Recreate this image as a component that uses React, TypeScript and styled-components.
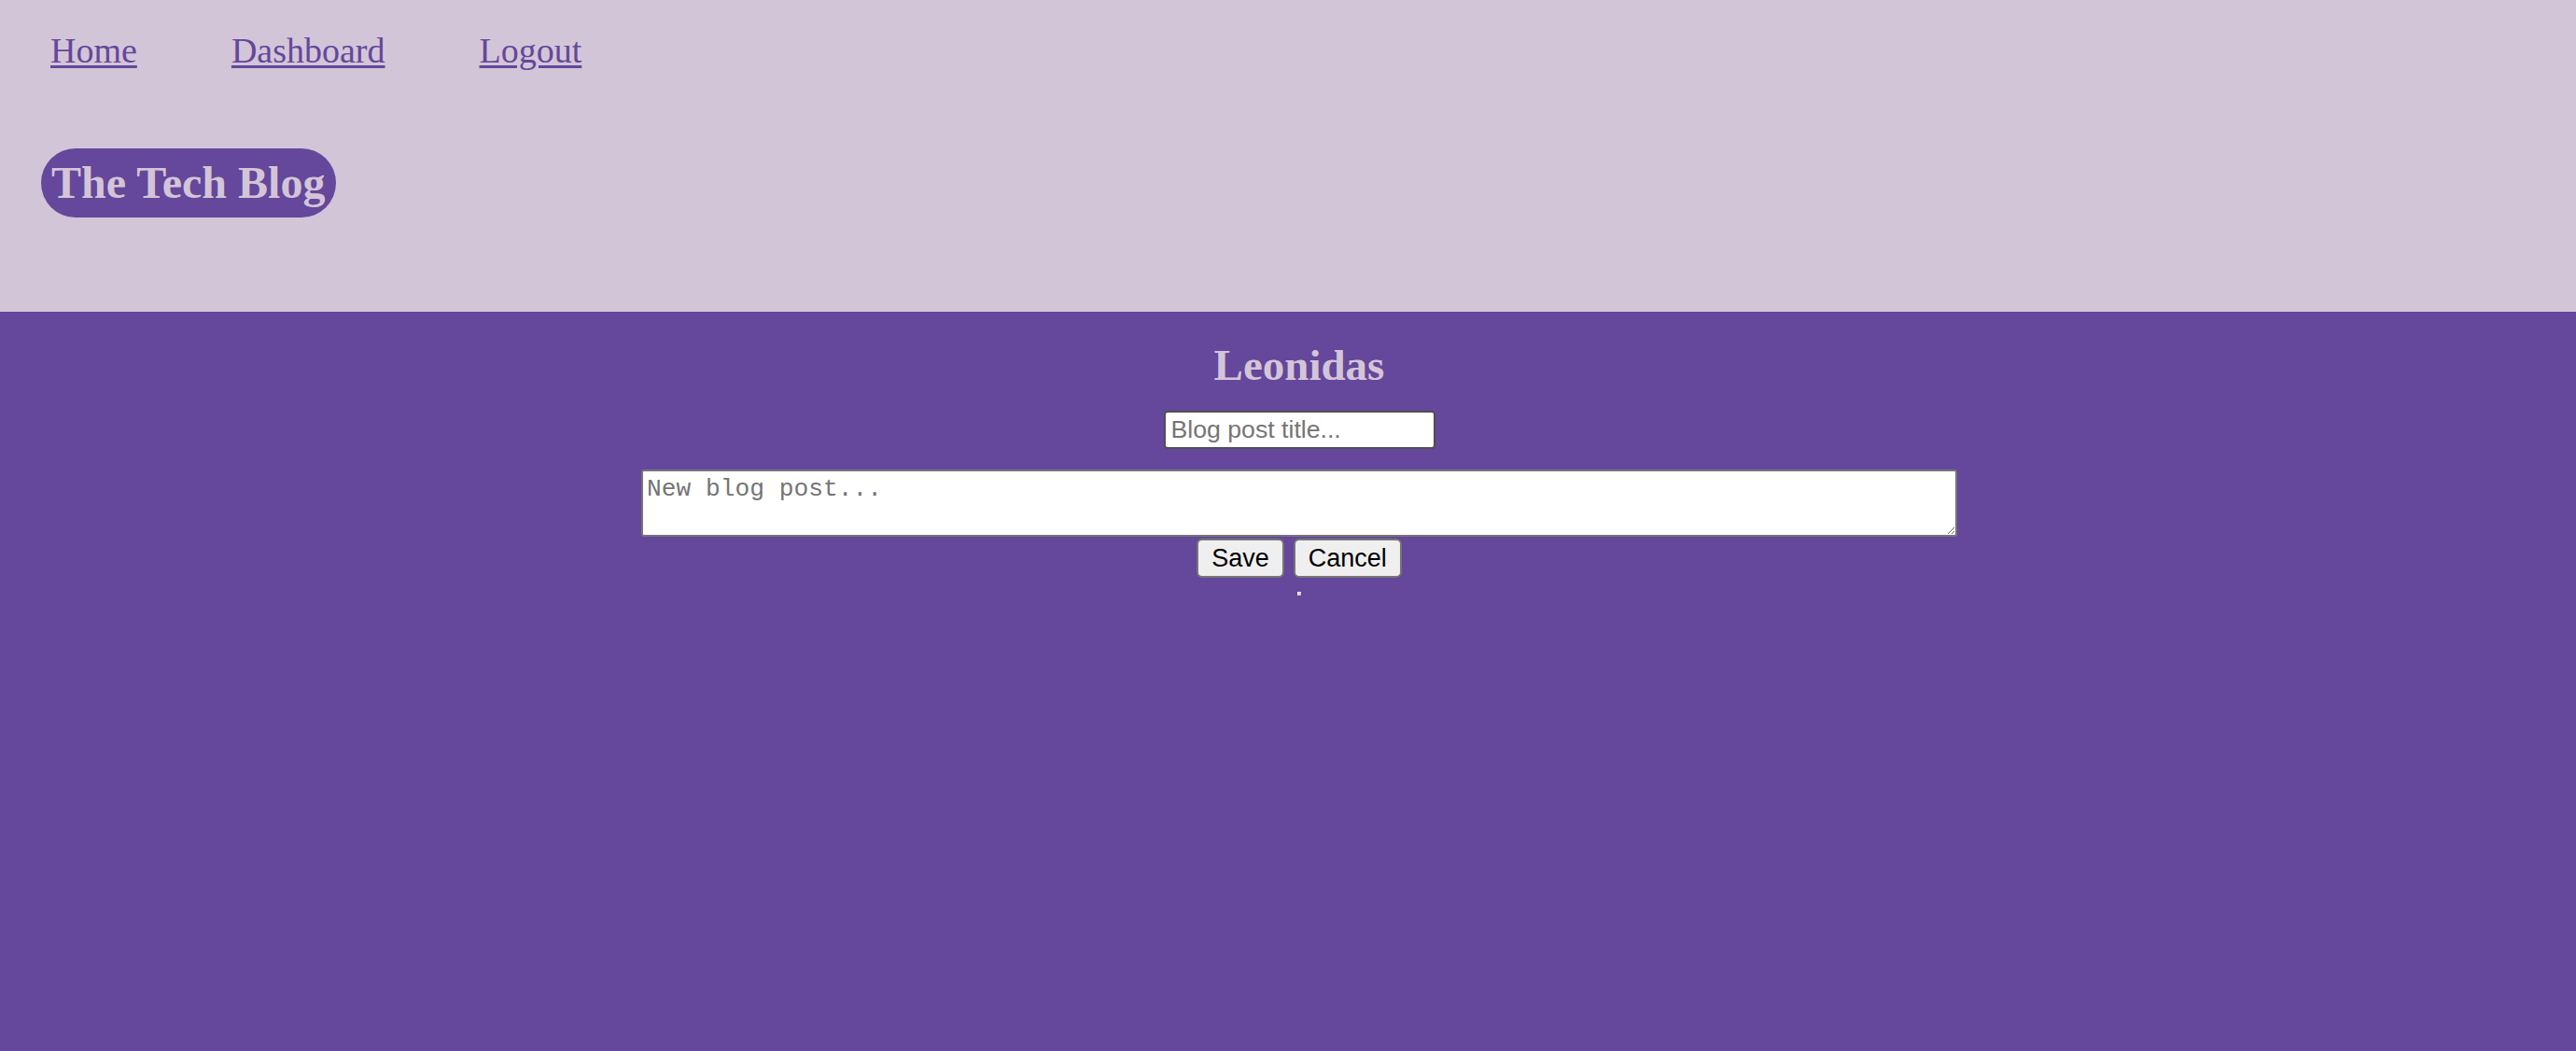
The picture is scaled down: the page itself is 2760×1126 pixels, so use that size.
import React from "react";
import styled, { createGlobalStyle } from "styled-components";

const GlobalStyle = createGlobalStyle`
  html, body {
    margin: 0;
    padding: 0;
    background: #65479b;
  }
  body {
    font-family: "Liberation Serif", "Times New Roman", serif;
  }
`;

const Page = styled.div`
  min-height: 1126px;
  display: flex;
  flex-direction: column;
  background: #65479b;
`;

const Header = styled.header`
  height: 334px;
  box-sizing: border-box;
  background: #d3c5d8;
  padding: 33px 0 0 54px;
  display: flex;
  flex-direction: column;
  align-items: flex-start;
`;

const Nav = styled.nav`
  display: flex;
  gap: 101px;
`;

const NavLink = styled.a`
  font-family: "Liberation Serif", "Times New Roman", serif;
  font-size: 38px;
  line-height: 43.7px;
  color: #65479b;
  text-decoration: underline;
  text-decoration-thickness: 2.5px;
  text-underline-offset: 3px;
`;

const Brand = styled.h1`
  margin: 82px 0 0 -10px;
  padding: 10px 12px 10px 11px;
  font-family: "Liberation Serif", "Times New Roman", serif;
  font-weight: 700;
  font-size: 48px;
  line-height: 54px;
  color: #d3c5d8;
  background: #65479b;
  border-radius: 37px;
`;

const Main = styled.main`
  flex: 1;
  display: flex;
  flex-direction: column;
  align-items: center;
  padding: 30px 0 0 24px;
`;

const UserName = styled.h2`
  margin: 0 0 22px 0;
  font-family: "Liberation Serif", "Times New Roman", serif;
  font-weight: 700;
  font-size: 47px;
  line-height: 54px;
  color: #d3c5d8;
`;

const Form = styled.form`
  display: flex;
  flex-direction: column;
  align-items: center;
`;

const TitleInput = styled.input`
  box-sizing: border-box;
  width: 291px;
  height: 41px;
  padding: 0 6px;
  border: 2px solid #4f4f4f;
  border-radius: 4px;
  background: #fff;
  font-family: "Liberation Sans", Arial, sans-serif;
  font-size: 26.67px;
  outline: none;
  &::placeholder {
    color: #757575;
  }
`;

const BodyArea = styled.textarea`
  box-sizing: border-box;
  margin-top: 22px;
  width: 1410px;
  height: 72px;
  padding: 4px 4px;
  border: 2px solid #767676;
  border-radius: 3px;
  background: #fff;
  font-family: "Liberation Mono", "Courier New", monospace;
  font-size: 26.25px;
  line-height: 30px;
  outline: none;
  &::placeholder {
    color: #757575;
  }
`;

const ButtonRow = styled.div`
  margin-top: 2px;
  display: flex;
  gap: 10px;
`;

const Button = styled.button`
  box-sizing: border-box;
  height: 42px;
  padding: 0 14px;
  border: 2px solid #767676;
  border-radius: 6px;
  background: #efefef;
  color: #000;
  font-family: "Liberation Sans", Arial, sans-serif;
  font-size: 27px;
  line-height: 30px;
`;

const Dot = styled.span`
  margin-top: 15px;
  width: 4px;
  height: 4px;
  background: linear-gradient(135deg, #ffffff, #b9b3c8);
`;

export default function App() {
  return (
    <Page>
      <GlobalStyle />
      <Header>
        <Nav>
          <NavLink href="#">Home</NavLink>
          <NavLink href="#">Dashboard</NavLink>
          <NavLink href="#">Logout</NavLink>
        </Nav>
        <Brand>The Tech Blog</Brand>
      </Header>
      <Main>
        <UserName>Leonidas</UserName>
        <Form onSubmit={(e) => e.preventDefault()}>
          <TitleInput type="text" placeholder="Blog post title..." />
          <BodyArea placeholder="New blog post..." />
          <ButtonRow>
            <Button type="submit">Save</Button>
            <Button type="button">Cancel</Button>
          </ButtonRow>
          <Dot />
        </Form>
      </Main>
    </Page>
  );
}
